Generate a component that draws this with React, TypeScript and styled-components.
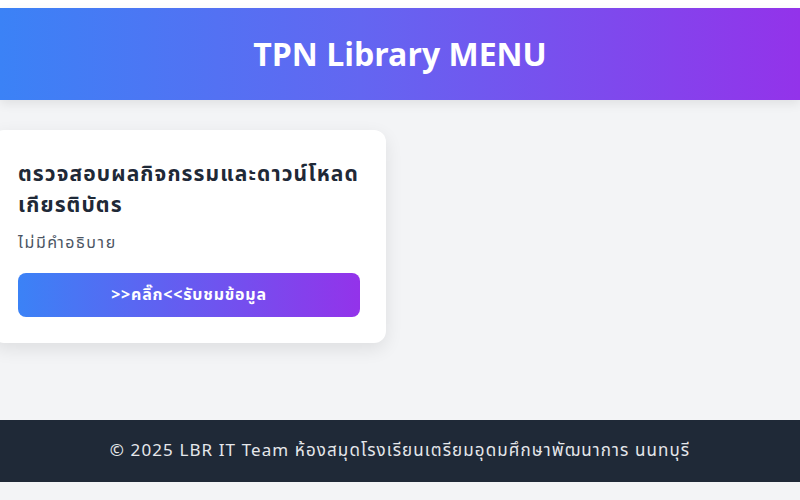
import React from "react";
import styled, { createGlobalStyle } from "styled-components";

const Global = createGlobalStyle`
  html, body { margin: 0; padding: 0; background: #f3f4f6; }
  body { font-family: "Noto Sans Thai", "Noto Sans", "Liberation Sans", sans-serif; overflow: hidden; }
  * { box-sizing: border-box; }
`;

const Page = styled.div`
  width: 800px;
  min-height: 500px;
  display: flex;
  flex-direction: column;
  background: #f3f4f6;
  border-top: 8px solid #ffffff;
`;

const Header = styled.header`
  height: 92px;
  padding-top: 3px;
  display: flex;
  align-items: center;
  justify-content: center;
  background: linear-gradient(90deg, #3b82f6 0%, #6366f1 45%, #9333ea 100%);
  box-shadow: 0 4px 10px rgba(0, 0, 0, 0.08);
`;

const Title = styled.h1`
  margin: 0;
  color: #ffffff;
  font-size: 32px;
  font-weight: 700;
  letter-spacing: 0;
`;

const Main = styled.main`
  height: 320px;
  padding: 30px 0 0 0;
`;

const Grid = styled.div`
  display: grid;
  grid-template-columns: 394px;
  margin-left: -8px;
`;

const Card = styled.div`
  background: #ffffff;
  border-radius: 12px;
  box-shadow: 0 6px 18px rgba(0, 0, 0, 0.09);
  padding: 29px 26px 26px 26px;
  height: 213px;
  display: flex;
  flex-direction: column;
`;

const CardTitle = styled.h2`
  margin: 0;
  font-size: 21px;
  font-weight: 700;
  line-height: 31px;
  letter-spacing: 1.1px;
  color: #1f2937;
`;

const CardDesc = styled.p`
  margin: 11px 0 0 0;
  font-size: 16px;
  line-height: 22px;
  letter-spacing: 1.6px;
  color: #4b5563;
`;

const Button = styled.a`
  margin-top: 19px;
  height: 44px;
  border-radius: 8px;
  display: flex;
  align-items: center;
  justify-content: center;
  background: linear-gradient(90deg, #3b82f6 0%, #9333ea 100%);
  color: #ffffff;
  font-size: 16px;
  font-weight: 700;
  letter-spacing: 0.8px;
  text-decoration: none;
`;

const Footer = styled.footer`
  height: 62px;
  display: flex;
  align-items: center;
  justify-content: center;
  background: #1f2937;
  color: #e5e7eb;
  font-size: 17px;
  letter-spacing: 1.1px;
`;

export default function App() {
  return (
    <>
      <Global />
      <Page>
        <Header>
          <Title>TPN Library MENU</Title>
        </Header>
        <Main>
          <Grid>
            <Card>
              <CardTitle>ตรวจสอบผลกิจกรรมและดาวน์โหลดเกียรติบัตร</CardTitle>
              <CardDesc>ไม่มีคำอธิบาย</CardDesc>
              <Button href="#">&gt;&gt;คลิ๊ก&lt;&lt;รับชมข้อมูล</Button>
            </Card>
          </Grid>
        </Main>
        <Footer>© 2025 LBR IT Team ห้องสมุดโรงเรียนเตรียมอุดมศึกษาพัฒนาการ นนทบุรี</Footer>
      </Page>
    </>
  );
}
